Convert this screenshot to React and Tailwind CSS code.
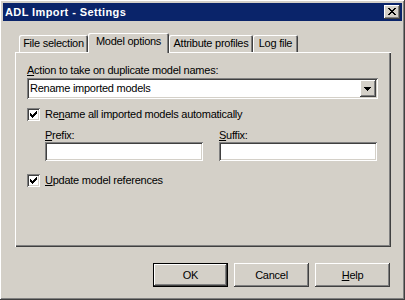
import React from 'react';

const raised =
  'shadow-[inset_-1px_-1px_#404040,inset_1px_1px_#ffffff,inset_-2px_-2px_#808080,inset_2px_2px_#d4d0c8]';
const sunken =
  'shadow-[inset_1px_1px_#808080,inset_-1px_-1px_#ffffff,inset_2px_2px_#404040,inset_-2px_-2px_#d4d0c8]';

const Checkbox = ({ checked }) => (
  <span className={`relative inline-block h-[13px] w-[13px] shrink-0 bg-white ${sunken}`}>
    {checked && (
      <svg className="absolute left-[3px] top-[3px]" width="7" height="7" viewBox="0 0 7 7">
        <path d="M0 2h1v1h1v1h1v-1h1v-1h1v-1h1v-1h1v3h-1v1h-1v1h-1v1h-1v1h-1v-1h-1v-1h-1z" fill="#000" />
      </svg>
    )}
  </span>
);

const Tab = ({ label, width, active }) =>
  active ? (
    <div
      className="relative z-10 -mb-px flex h-[20px] items-start justify-center rounded-t-[2px] bg-[#d4d0c8] pt-[2px] shadow-[inset_1px_1px_#ffffff,inset_-1px_0_#404040,inset_-2px_0_#808080]"
      style={{ width }}
    >
      {label}
    </div>
  ) : (
    <div
      className="flex h-[17px] items-center justify-center rounded-t-[2px] bg-[#d4d0c8] pb-[1px] shadow-[inset_1px_1px_#ffffff,inset_-1px_0_#404040,inset_-2px_0_#808080]"
      style={{ width }}
    >
      {label}
    </div>
  );

const Button = ({ children, isDefault }) => (
  <button
    className={`flex h-[24px] w-[75px] items-center justify-center bg-[#d4d0c8] ${
      isDefault
        ? 'shadow-[inset_0_0_0_1px_#000000,inset_-2px_-2px_#404040,inset_2px_2px_#ffffff,inset_-3px_-3px_#808080]'
        : raised
    }`}
  >
    {children}
  </button>
);

export default function App() {
  return (
    <div
      className={`flex h-[300px] w-[405px] flex-col bg-[#d4d0c8] p-[3px] text-[11px] leading-[13px] tracking-[-0.25px] text-black ${raised}`}
      style={{ fontFamily: '"Liberation Sans", Arial, sans-serif' }}
    >
      <div className="flex h-[18px] items-center justify-between bg-[#0a246a] pl-[2px] pr-[2px]">
        <span className="text-[11px] font-bold tracking-[0.4px] text-white">ADL Import - Settings</span>
        <div className={`relative h-[14px] w-[16px] bg-[#d4d0c8] ${raised}`}>
          <svg className="absolute left-[4px] top-[3px]" width="8" height="7" viewBox="0 0 8 7">
            <path d="M0 0h2v1h1v1h2v-1h1v-1h2v1h-1v1h-1v1h-1v1h1v1h1v1h1v1h-2v-1h-1v-1h-2v1h-1v1h-2v-1h1v-1h1v-1h1v-1h-1v-1h-1v-1h-1z" fill="#000" />
          </svg>
        </div>
      </div>

      <div className="flex flex-1 flex-col px-[12px] pt-[12px]">
        <div className="flex items-end pl-[4px]">
          <Tab label="File selection" width={69} />
          <Tab label="Model options" width={81} active />
          <Tab label="Attribute profiles" width={84} />
          <Tab label="Log file" width={45} />
        </div>

        <div className="flex h-[195px] w-[376px] flex-col bg-[#d4d0c8] pl-[12px] pt-[12px] shadow-[inset_1px_1px_#ffffff,inset_-1px_-1px_#404040,inset_-2px_-2px_#808080]">
          <div>
            <u>A</u>ction to take on duplicate model names:
          </div>
          <div className={`mt-[1px] flex h-[21px] w-[351px] items-center bg-white pl-[3px] pr-[2px] ${sunken}`}>
            <span className="flex-1">Rename imported models</span>
            <div className={`relative h-[17px] w-[16px] bg-[#d4d0c8] ${raised}`}>
              <svg className="absolute left-[4px] top-[7px]" width="7" height="4" viewBox="0 0 7 4">
                <path d="M0 0h7v1h-1v1h-1v1h-1v1h-1v-1h-1v-1h-1v-1h-1z" fill="#000" />
              </svg>
            </div>
          </div>

          <div className="mt-[9px] flex items-center gap-[5px]">
            <Checkbox checked />
            <span>
              Re<u>n</u>ame all imported models automatically
            </span>
          </div>

          <div className="mt-[8px] flex gap-[16px] pl-[18px]">
            <div className="flex flex-col">
              <span>
                <u>P</u>refix:
              </span>
              <div className={`h-[19px] w-[158px] bg-white ${sunken}`} />
            </div>
            <div className="flex flex-col">
              <span>
                <u>S</u>uffix:
              </span>
              <div className={`h-[19px] w-[158px] bg-white ${sunken}`} />
            </div>
          </div>

          <div className="mt-[13px] flex items-center gap-[5px]">
            <Checkbox checked />
            <span>
              <u>U</u>pdate model references
            </span>
          </div>
        </div>

        <div className="mt-[16px] flex justify-end gap-[6px]">
          <Button isDefault>OK</Button>
          <Button>Cancel</Button>
          <Button>
            <span>
              <u>H</u>elp
            </span>
          </Button>
        </div>
      </div>
    </div>
  );
}
